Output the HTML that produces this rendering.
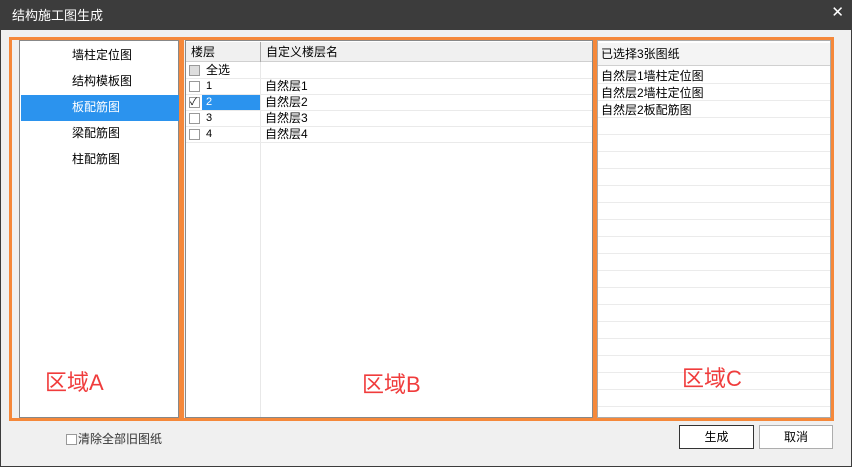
<!DOCTYPE html><html><head><meta charset="utf-8"><style>
*{margin:0;padding:0;box-sizing:border-box}
body{width:852px;height:467px;background:#f0f0f0;font-family:"Liberation Sans","Noto Sans CJK SC",sans-serif;font-size:12px;line-height:15px;color:#000;position:relative;overflow:hidden}
.a{position:absolute}
.title{left:0;top:0;width:852px;height:30px;background:#3c3c3c;color:#fff;font-size:13px;padding:8px 0 0 12px}
.x{right:8px;top:5px;color:#fff;font-size:15px}
.or{border:3px solid #f5883a}
.w{background:#fff;border:1px solid #888}
.red{color:#f03c3c;font-size:22px;line-height:26px}
.row{position:absolute;left:0;right:0;border-bottom:1px solid #eaeaea;height:16px;line-height:15px}
.cb{position:absolute;width:11px;height:11px;border:1px solid #999;background:#fff}
.btn{position:absolute;height:24px;border:1px solid #adadad;background:#fff;text-align:center;line-height:22px;font-size:12px}
</style></head><body>
<div class="a title">结构施工图生成</div><div class="a x">✕</div>
<div class="a" style="left:0;top:0;width:852px;height:467px;border:1px solid #3c3c3c;pointer-events:none"></div>
<div class="a w" style="left:19px;top:40px;width:160px;height:378px">
 <div class="a" style="left:52px;top:7px">墙柱定位图</div>
 <div class="a" style="left:52px;top:33px">结构模板图</div>
 <div class="a" style="left:1px;top:54px;width:158px;height:26px;background:#2b93ee"></div>
 <div class="a" style="left:52px;top:59px;color:#fff">板配筋图</div>
 <div class="a" style="left:52px;top:85px">梁配筋图</div>
 <div class="a" style="left:52px;top:111px">柱配筋图</div>
</div>
<div class="a w" style="left:185px;top:40px;width:408px;height:378px">
 <div class="a" style="left:0;top:1px;width:406px;height:20px;background:#f0f0f0;border-bottom:1px solid #d0d0d0"></div>
 <div class="a" style="left:74px;top:1px;width:1px;height:375px;background:#e8e8e8"></div>
 <div class="a" style="left:74px;top:1px;width:1px;height:20px;background:#aaa"></div>
 <div class="a" style="left:5px;top:4px">楼层</div><div class="a" style="left:80px;top:4px">自定义楼层名</div>
 <div class="row" style="top:22px"><div class="cb" style="left:3px;top:2px;background:#ddd"></div><div class="a" style="left:20px;top:0">全选</div></div>
 <div class="row" style="top:38px"><div class="cb" style="left:3px;top:2px"></div><div class="a" style="left:20px;top:0;font-size:11px">1</div><div class="a" style="left:79px;top:0">自然层1</div></div>
 <div class="row" style="top:54px"><div class="cb" style="left:3px;top:2px;font-size:10px;line-height:9px">✓</div><div class="a" style="left:16px;top:0;width:58px;height:15px;background:#2b93ee;color:#fff;padding-left:4px;font-size:11px">2</div><div class="a" style="left:79px;top:0">自然层2</div></div>
 <div class="row" style="top:70px"><div class="cb" style="left:3px;top:2px"></div><div class="a" style="left:20px;top:0;font-size:11px">3</div><div class="a" style="left:79px;top:0">自然层3</div></div>
 <div class="row" style="top:86px"><div class="cb" style="left:3px;top:2px"></div><div class="a" style="left:20px;top:0;font-size:11px">4</div><div class="a" style="left:79px;top:0">自然层4</div></div>
</div>
<div class="a w" style="left:597px;top:40px;width:234px;height:378px;border-color:#aaa">
 <div class="a" style="left:0;top:2px;width:232px;height:23px;background:#f4f4f4;border-bottom:1px solid #d0d0d0;padding:4px 0 0 3px">已选择3张图纸</div>
 <div style="position:absolute;left:0;right:0;top:26px;height:350px;background:repeating-linear-gradient(#fff 0 16px,#ebebeb 16px 17px)"></div>
 <div class="a" style="left:3px;top:27px;line-height:17px">自然层1墙柱定位图<br>自然层2墙柱定位图<br>自然层2板配筋图</div>
</div>
<div class="a or" style="left:9px;top:37px;width:173px;height:384px"></div>
<div class="a or" style="left:181px;top:37px;width:415px;height:384px"></div>
<div class="a or" style="left:594px;top:37px;width:240px;height:384px"></div>
<div class="a red" style="left:45px;top:370px">区域A</div>
<div class="a red" style="left:362px;top:372px">区域B</div>
<div class="a red" style="left:682px;top:366px">区域C</div>
<div class="cb" style="left:66px;top:434px"></div><div class="a" style="left:78px;top:432px;color:#333">清除全部旧图纸</div>
<div class="btn" style="left:679px;top:425px;width:75px;border-color:#333">生成</div>
<div class="btn" style="left:759px;top:425px;width:74px">取消</div>
</body></html>
